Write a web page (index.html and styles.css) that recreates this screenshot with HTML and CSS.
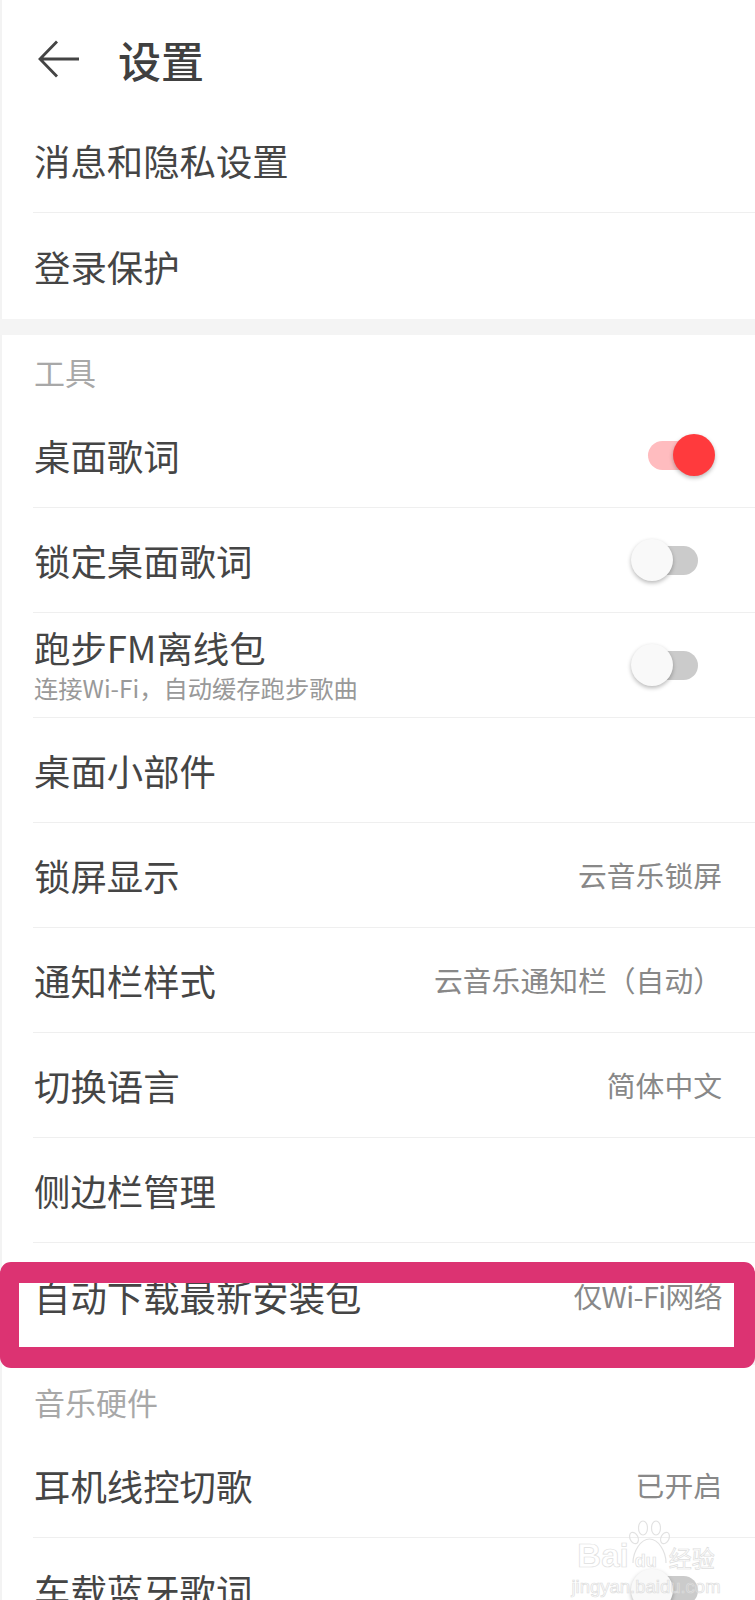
FILE: index.html
```html
<!DOCTYPE html>
<html lang="zh-CN">
<head>
<meta charset="utf-8">
<title>设置</title>
<link rel="stylesheet" href="styles.css">
</head>
<body>
<div class="screen">
  <header class="topbar">
    <svg class="back" viewBox="0 0 42 38" width="42" height="38"><path d="M19 1.500 2 19l17 17.500M2 19h39" fill="none" stroke="#444" stroke-width="2.800"/></svg>
    <h1 class="title">设置</h1>
  </header>

  <section>
    <div class="row"><span class="label">消息和隐私设置</span></div>
    <div class="row last"><span class="label">登录保护</span></div>
  </section>

  <div class="band"></div>

  <section>
    <div class="head">工具</div>
    <div class="row"><span class="label">桌面歌词</span><span class="toggle on"><i class="knob"></i></span></div>
    <div class="row"><span class="label">锁定桌面歌词</span><span class="toggle"><i class="knob"></i></span></div>
    <div class="row"><span class="stack"><span class="label">跑步FM离线包</span><span class="sub">连接Wi-Fi，自动缓存跑步歌曲</span></span><span class="toggle"><i class="knob"></i></span></div>
    <div class="row"><span class="label">桌面小部件</span></div>
    <div class="row"><span class="label">锁屏显示</span><span class="value">云音乐锁屏</span></div>
    <div class="row"><span class="label">通知栏样式</span><span class="value">云音乐通知栏（自动）</span></div>
    <div class="row"><span class="label">切换语言</span><span class="value">简体中文</span></div>
    <div class="row"><span class="label">侧边栏管理</span></div>
    <div class="row last"><span class="label">自动下载最新安装包</span><span class="value tight">仅Wi-Fi网络</span></div>
  </section>

  <div class="band"></div>

  <section>
    <div class="head">音乐硬件</div>
    <div class="row"><span class="label">耳机线控切歌</span><span class="value">已开启</span></div>
    <div class="row"><span class="label">车载蓝牙歌词</span><span class="toggle"><i class="knob"></i></span></div>
  </section>

  <div class="highlight"></div>

  <div class="mark">
    <svg class="paw" viewBox="0 0 42 36" width="42" height="36">
      <g fill="none" stroke="#e2e2e2" stroke-width="1.200">
        <ellipse cx="14" cy="9" rx="4.500" ry="7"/>
        <ellipse cx="27" cy="9" rx="4.500" ry="7"/>
        <ellipse cx="5" cy="19" rx="4" ry="6" transform="rotate(-25 5 19)"/>
        <ellipse cx="36" cy="19" rx="4" ry="6" transform="rotate(25 36 19)"/>
        <path d="M4 44c0-12 8-24 16.500-24S37 32 37 44"/>
      </g>
    </svg>
    <div class="mark-line"><span class="mark-bai">Bai</span><span class="mark-du">du</span><span class="mark-cn">经验</span></div>
    <div class="mark-url">jingyan.baidu.com</div>
  </div>
</div>
</body>
</html>
```

FILE: styles.css
```css
* { box-sizing: border-box; }
html, body { margin: 0; padding: 0; height: 1600px; overflow: hidden; background: #fff; }
body { font-family: "Noto Sans CJK SC", "Noto Sans", sans-serif; color: #444; }

.screen { position: relative; width: 755px; height: 1600px; overflow: hidden; box-shadow: inset 2px 0 0 #f3f3f3; }

.topbar { height: 108px; display: flex; align-items: center; padding: 0 0 0 38px; gap: 38px; }
.back { flex: none; margin-top: 14px; margin-bottom: 5px; }
.title { margin: 11px 0 0; font-size: 43px; line-height: 1; font-weight: 500; color: #404040; }

.row { height: 105px; margin-left: 33px; padding-right: 33px; display: flex; align-items: center; justify-content: space-between; border-bottom: 1px solid #efefef; }
.row.last { border-bottom: 0; height: 106px; }
.label { padding: 2px 0 0 1px; font-size: 36.400px; line-height: 1.2; color: #454545; white-space: nowrap; }
.value { font-size: 28.800px; line-height: 1.2; color: #888; white-space: nowrap; }
.value.tight { letter-spacing: -.6px; }
.stack { display: flex; flex-direction: column; gap: 3px; margin-top: -3px; }
.stack .label { padding-top: 0; line-height: 46px; }
.sub { padding-left: 1px; font-size: 24.300px; line-height: 30px; color: #999; white-space: nowrap; }

.band { height: 16px; background: #f4f4f4; }
.head { height: 68px; margin-left: 34px; padding-top: 17px; font-size: 31px; line-height: 40px; color: #a8a8a8; }

.toggle { position: relative; flex: none; width: 50px; height: 29px; margin-right: 24px; border-radius: 15px; background: #cbcbcb; }
.knob { position: absolute; top: -6.500px; left: -17px; width: 42px; height: 42px; border-radius: 50%; background: #f9f9f9; box-shadow: 0 2px 4px rgba(0, 0, 0, .28); }
.toggle.on { background: #ffbcbf; }
.toggle.on .knob { left: 25px; background: #ff3a3d; }

.highlight { position: absolute; left: 0; top: 1262px; width: 755px; height: 106px; border-style: solid; border-color: #dc3372; border-width: 21px 21px 21px 19px; border-radius: 11px; }

.mark { position: absolute; left: 577px; top: 1519px; width: 138px; display: flex; flex-direction: column; align-items: center; color: transparent; -webkit-text-stroke: .7px #dedede; }
.paw { margin-left: 8px; margin-bottom: -13px; overflow: visible; }
.mark-line { display: flex; align-items: baseline; font-family: "Liberation Sans", sans-serif; line-height: 28px; white-space: nowrap; }
.mark-bai { font-size: 33px; font-weight: 700; }
.mark-du { font-size: 18px; font-weight: 700; margin: 0 12px 0 6px; }
.mark-cn { font-family: "Noto Sans CJK SC", sans-serif; font-size: 23px; }
.mark-url { font-family: "Liberation Sans", sans-serif; font-size: 18.500px; line-height: 24px; white-space: nowrap; }
```
